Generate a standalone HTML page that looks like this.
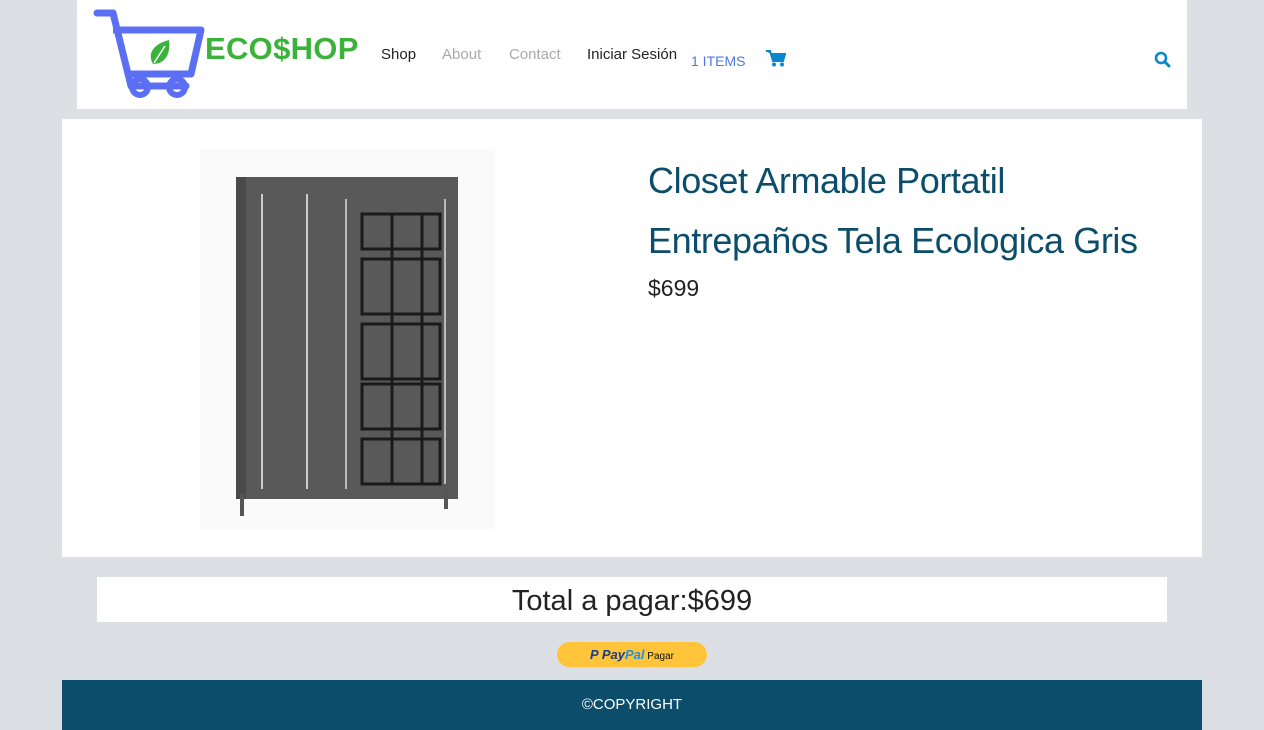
<!DOCTYPE html>
<html><head><meta charset="utf-8"><style>
*{margin:0;padding:0;box-sizing:border-box}
body{width:1264px;height:730px;background:#dcdfe3;font-family:"Liberation Sans",sans-serif;position:relative;overflow:hidden}
.hdr{position:absolute;left:77px;top:0;width:1110px;height:109px;background:#fff}
.nav{position:absolute;font-size:15px;top:46px}
.main{position:absolute;left:62px;top:119px;width:1140px;height:438px;background:#fff}
.total{position:absolute;left:97px;top:577px;width:1070px;height:45px;background:#fff;text-align:center;font-size:29px;color:#222;line-height:48px}
.pp{position:absolute;left:557px;top:642px;width:150px;height:25px;background:#ffc43a;border-radius:13px;text-align:center;font-size:10px;line-height:26px;color:#111}
.ft{position:absolute;left:62px;top:680px;width:1140px;height:50px;background:#0b4d6a;color:#fff;text-align:center;font-size:15px;line-height:50px}
</style></head><body>
<div class="hdr">
<svg style="position:absolute;left:14px;top:8px" width="120" height="94" viewBox="0 0 120 94">
<path d="M6 5 H22 L40 78 H95" fill="none" stroke="#5b6ff5" stroke-width="7" stroke-linejoin="round" stroke-linecap="round"/>
<path d="M22 22 H110 L100 66 H36" fill="none" stroke="#5b6ff5" stroke-width="7" stroke-linejoin="round"/>
<circle cx="49" cy="79" r="8" fill="none" stroke="#5b6ff5" stroke-width="6"/>
<circle cx="86" cy="79" r="8" fill="none" stroke="#5b6ff5" stroke-width="6"/>
<path d="M62 56 C56 46 62 36 78 32 C80 46 74 56 62 56Z" fill="#3bb33a"/>
<path d="M63 55 L74 38" stroke="#fff" stroke-width="1.5"/>
</svg>
<div style="position:absolute;left:128px;top:31px;font-size:31px;font-weight:bold;color:#3bb33a;letter-spacing:0.3px">ECO$HOP</div>
<div class="nav" style="left:304px;color:#222">Shop</div>
<div class="nav" style="left:365px;color:#aaa">About</div>
<div class="nav" style="left:432px;color:#aaa">Contact</div>
<div class="nav" style="left:510px;color:#222">Iniciar Sesión</div>
<div class="nav" style="left:614px;top:53px;font-size:14px;color:#4f77e0">1 ITEMS</div>
<svg style="position:absolute;left:689px;top:50px" width="20" height="17" viewBox="0 0 20 17"><path d="M0 1H4L7 11H17L19 4H5" fill="#0a88cc" stroke="#0a88cc" stroke-width="2"/><circle cx="8" cy="14.5" r="2" fill="#0a88cc"/><circle cx="16" cy="14.5" r="2" fill="#0a88cc"/></svg>
<svg style="position:absolute;left:1077px;top:51px" width="17" height="17" viewBox="0 0 17 17"><circle cx="7" cy="7" r="5" fill="none" stroke="#0a88cc" stroke-width="2.6"/><path d="M11 11L15 15" stroke="#0a88cc" stroke-width="3" stroke-linecap="round"/></svg>
</div>
<div class="main">
<svg style="position:absolute;left:138px;top:30px" width="295" height="380" viewBox="0 0 295 380">
<rect x="0" y="0" width="295" height="380" fill="#fafafa"/>
<rect x="36" y="28" width="222" height="322" fill="#595959"/>
<rect x="36" y="28" width="10" height="322" fill="#4a4a4a"/>
<line x1="62" y1="45" x2="62" y2="340" stroke="#ccc" stroke-width="2"/>
<line x1="107" y1="45" x2="107" y2="340" stroke="#ccc" stroke-width="2"/>
<line x1="146" y1="50" x2="146" y2="340" stroke="#bbb" stroke-width="2"/>
<line x1="245" y1="50" x2="245" y2="335" stroke="#bbb" stroke-width="2"/>
<g fill="none" stroke="#1a1a1a" stroke-width="3">
<rect x="162" y="65" width="78" height="35"/><rect x="162" y="110" width="78" height="55"/><rect x="162" y="175" width="78" height="55"/><rect x="162" y="235" width="78" height="45"/><rect x="162" y="290" width="78" height="45"/>
<line x1="192" y1="65" x2="192" y2="335"/><line x1="222" y1="65" x2="222" y2="335"/></g>
<rect x="40" y="345" width="4" height="22" fill="#555"/><rect x="244" y="340" width="4" height="20" fill="#555"/>
</svg>
<div style="position:absolute;left:586px;top:32px;width:540px;font-size:36px;line-height:60px;color:#0b4d6a;letter-spacing:-0.4px">Closet Armable Portatil Entrepaños Tela Ecologica Gris</div>
<div style="position:absolute;left:586px;top:156px;font-size:23px;color:#222">$699</div>
</div>
<div class="total">Total a pagar:$699</div>
<div class="pp"><b style="color:#173c8c;font-style:italic;font-size:13px">P <span>Pay</span><span style="color:#2a8ed8">Pal</span></b> Pagar</div>
<div class="ft">©COPYRIGHT</div>
</body></html>
